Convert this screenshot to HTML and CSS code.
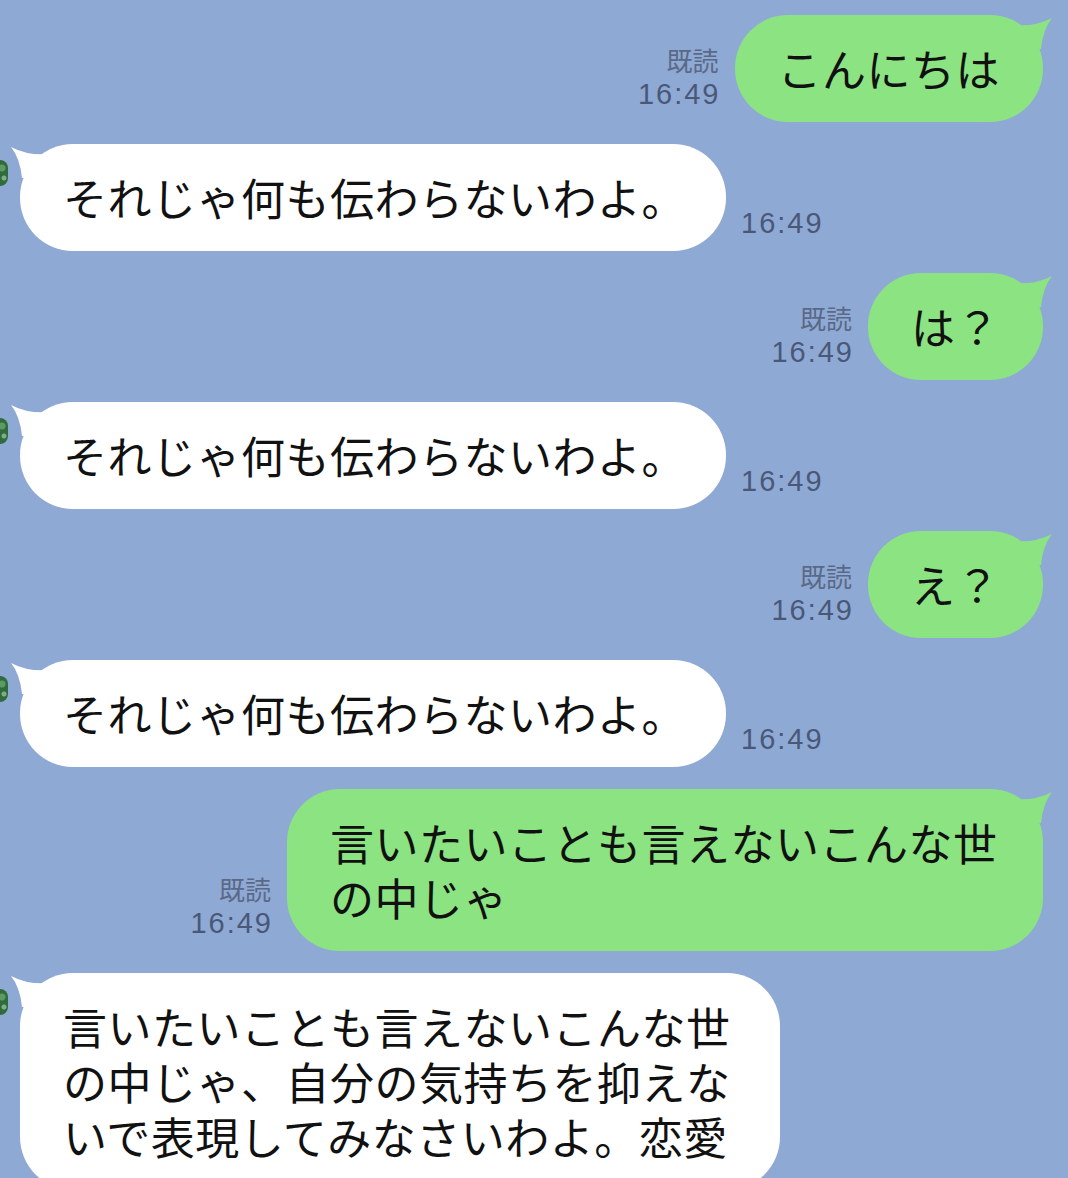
FILE: index.html
```html
<!DOCTYPE html>
<html lang="ja">
<head>
    <meta charset="UTF-8">
    <meta name="viewport" content="width=device-width, initial-scale=1.0">
    <title>トーク</title>
    <link rel="stylesheet" href="styles.css">
</head>
<body>
    <div class="chat">
        <div class="row row-me">
            <div class="status"><span class="read">既読</span><span class="time">16:49</span></div>
            <div class="bubble bubble-me">こんにちは<svg class="tail" viewBox="0 0 40 36"><path d="M0,10 Q22,12 39,3 Q30,14 28,34 L0,34 Z"/></svg></div>
        </div>

        <div class="row row-friend">
            <div class="avatar"></div>
            <div class="bubble bubble-friend">それじゃ何も伝わらないわよ。<svg class="tail" viewBox="0 0 40 36"><path d="M0,10 Q22,12 39,3 Q30,14 28,34 L0,34 Z"/></svg></div>
            <span class="time">16:49</span>
        </div>

        <div class="row row-me">
            <div class="status"><span class="read">既読</span><span class="time">16:49</span></div>
            <div class="bubble bubble-me">は？<svg class="tail" viewBox="0 0 40 36"><path d="M0,10 Q22,12 39,3 Q30,14 28,34 L0,34 Z"/></svg></div>
        </div>

        <div class="row row-friend">
            <div class="avatar"></div>
            <div class="bubble bubble-friend">それじゃ何も伝わらないわよ。<svg class="tail" viewBox="0 0 40 36"><path d="M0,10 Q22,12 39,3 Q30,14 28,34 L0,34 Z"/></svg></div>
            <span class="time">16:49</span>
        </div>

        <div class="row row-me">
            <div class="status"><span class="read">既読</span><span class="time">16:49</span></div>
            <div class="bubble bubble-me">え？<svg class="tail" viewBox="0 0 40 36"><path d="M0,10 Q22,12 39,3 Q30,14 28,34 L0,34 Z"/></svg></div>
        </div>

        <div class="row row-friend">
            <div class="avatar"></div>
            <div class="bubble bubble-friend">それじゃ何も伝わらないわよ。<svg class="tail" viewBox="0 0 40 36"><path d="M0,10 Q22,12 39,3 Q30,14 28,34 L0,34 Z"/></svg></div>
            <span class="time">16:49</span>
        </div>

        <div class="row row-me">
            <div class="status"><span class="read">既読</span><span class="time">16:49</span></div>
            <div class="bubble bubble-me">言いたいことも言えないこんな世の中じゃ<svg class="tail" viewBox="0 0 40 36"><path d="M0,10 Q22,12 39,3 Q30,14 28,34 L0,34 Z"/></svg></div>
        </div>

        <div class="row row-friend">
            <div class="avatar"></div>
            <div class="bubble bubble-friend bubble-long">言いたいことも言えないこんな世の中じゃ、自分の気持ちを抑えないで表現してみなさいわよ。恋愛<svg class="tail" viewBox="0 0 40 36"><path d="M0,10 Q22,12 39,3 Q30,14 28,34 L0,34 Z"/></svg></div>
        </div>
    </div>
</body>
</html>
```

FILE: styles.css
```css
body {
    margin: 0;
    background-color: #8fa9d5;
    font-family: "Noto Sans CJK JP", "Noto Sans", sans-serif;
    color: #111;
    overflow: hidden;
}
.chat {
    display: flex;
    flex-direction: column;
    gap: 22px;
    padding: 15px 25px 0 0;
}
.row {
    display: flex;
    align-items: flex-end;
}
.row-me {
    justify-content: flex-end;
    gap: 16px;
}
.row-friend {
    justify-content: flex-start;
}
.bubble {
    position: relative;
    padding: 26px 43px;
    max-width: 670px;
    font-size: 44px;
    line-height: 55px;
    letter-spacing: 0.5px;
    border-radius: 53px;
}
.bubble-me {
    background-color: #8ce382;
}
.bubble-friend {
    background-color: #fff;
    padding-right: 40px;
}
.bubble-long {
    padding-right: 47px;
}
.tail {
    position: absolute;
    top: 0;
    width: 40px;
    height: 36px;
}
.bubble-me .tail {
    right: -10px;
    fill: #8ce382;
}
.bubble-friend .tail {
    left: -10px;
    fill: #fff;
    transform: scaleX(-1);
}
.avatar {
    align-self: flex-start;
    width: 8px;
    height: 26px;
    margin-top: 16px;
    margin-right: 12px;
    border-radius: 0 12px 12px 0;
    background: radial-gradient(circle at 2px 8px, #5d9a62 0, #5d9a62 3px, transparent 4px),
                radial-gradient(circle at 4px 18px, #7fae86 0, #7fae86 2px, transparent 3px),
                #2f6b3b;
}
.status {
    display: flex;
    flex-direction: column;
    align-items: flex-end;
    margin-bottom: 11px;
}
.read {
    font-size: 26px;
    line-height: 34px;
    color: #5a6986;
}
.time {
    font-family: "Liberation Sans", Arial, sans-serif;
    font-size: 29px;
    line-height: 34px;
    letter-spacing: 2px;
    color: #4a5878;
}
.status .time {
    margin-right: -2px;
}
.row-friend .time {
    margin-left: 15px;
    margin-bottom: 11px;
}
```
